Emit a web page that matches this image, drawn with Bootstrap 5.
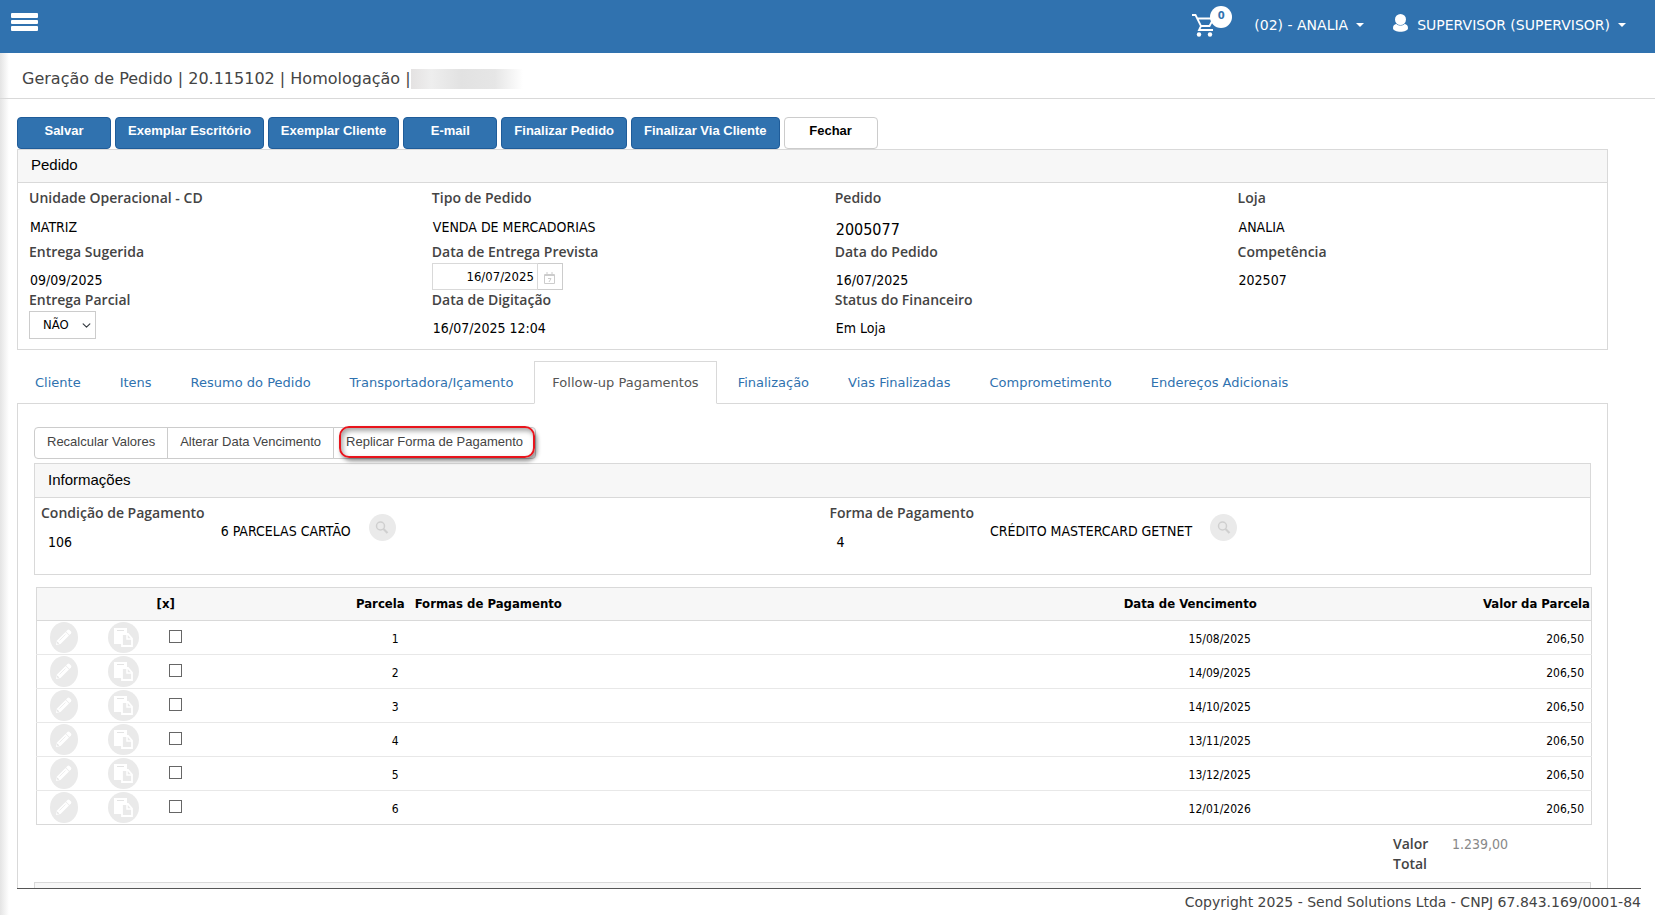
<!DOCTYPE html>
<html lang="pt-BR">
<head>
<meta charset="utf-8">
<meta name="viewport" content="width=device-width, initial-scale=1">
<title>Geração de Pedido</title>
<link href="https://cdn.jsdelivr.net/npm/bootstrap@5.3.0/dist/css/bootstrap.min.css" rel="stylesheet">
<style>
  body { font-family: "DejaVu Sans", Verdana, sans-serif; font-size: 13px; color: #444; background: #fff; }
  a { text-decoration: none; }
  .topbar { height: 53px; background: #3072af; font-size: 14px; }
  .topbar a, .topbar button { color: #fff; }
  .menu-btn { padding: 13px 11px; background: none; border: 0; line-height: 0; }
  .user-links { padding-right: 29px; line-height: 20px; height: 50px; }
  .user-links .dropdown-toggle::after { margin-left: 8px; border-width: 4px; border-bottom: 0; vertical-align: 3px; }
  .cart { padding-right: 18px; line-height: 0; }
  .cart-count { position: absolute; left: 18px; top: -8px; width: 22px; height: 22px; border-radius: 50%; background: #fff; color: #3072af; font: bold 10px/20px "DejaVu Sans", sans-serif; text-align: center; }
  .page-title { font-size: 16px; line-height: 20px; margin: 0; padding: 16px 22px 9px; border-bottom: 1px solid #d9d9d9; font-weight: 400; }
  .redacted { width: 112px; height: 20px; background: linear-gradient(90deg, #e4e2e2, #eee 18%, #e2e2e2 45%, #e6e6e6 75%, #fff); }
  .work { background: linear-gradient(90deg, #e4e4e4, #fff 9px); }
  .scroll-area { overflow: hidden; padding: 18px 47px 0 17px; }
  .act { height: 32px; min-width: 94px; padding: 0 12px 4px; border: 1px solid #1f5c99; border-radius: 4px; background: #3072af; color: #fff; font: bold 13px/20px "Liberation Sans", Arial, sans-serif; }
  .act-light { background: #fff; border-color: #ccc; color: #000; }
  .box { border: 1px solid #d9d9d9; background: #fff; }
  .box-head { font: 15px/20px "Liberation Sans", Arial, sans-serif; color: #000; background: #f7f7f7; border-bottom: 1px solid #d9d9d9; padding: 5px 13px 7px; margin: 0; }
  .box-head-tall { padding-top: 6px; }
  .order-grid { display: grid; grid-template-columns: repeat(3, 25.53%) 1fr; padding: 5px 0 10px 11px; }
  .lbl { display: block; font: 600 14px/20px "Open Sans", sans-serif; color: #444; }
  .val { font: 14px/20px "DejaVu Sans Condensed", "Open Sans", sans-serif; color: #000; padding: 8px 0 0 1px; }
  .val-tall { height: 34px; padding-top: 9px; }
  .val-big { font-size: 16px; line-height: 26px; }
  .date-box { width: 131px; height: 27px; margin-top: 1px; }
  .date-box input { border: 1px solid #d9d9d9; border-radius: 0; padding: 0 3px; font: 13px/20px "DejaVu Sans Condensed", sans-serif; color: #000; text-align: right; width: 106px; flex: none; }
  .date-box button { border: 1px solid #ccc; border-left: 0; border-radius: 0; background: #fff; flex: 1; padding: 2px 0 0; line-height: 0; }
  .sel { width: 67px; height: 28px; margin-top: 1px; border: 1px solid #ccc; border-radius: 0; padding: 0 0 0 13px; font: 13px/20px "DejaVu Sans Condensed", sans-serif; color: #000; background-size: 9px; background-position: right 4px center; }
  .order-tabs { margin-top: 11px; border-bottom: 1px solid #d9d9d9; }
  .order-tabs .nav-link { padding: 10px 17px; line-height: 21px; margin-right: 3px; color: #3072af; border-radius: 0; }
  .order-tabs .nav-link.active { color: #555; border-color: #d9d9d9 #d9d9d9 #fff; }
  .pane { border: solid #d9d9d9; border-width: 0 1px; padding: 23px 16px 0; background: #fff; }
  .tool-group .tool { height: 32px; padding: 0 12px 3px; border: 1px solid #ccc; background: #fff; color: #444; font: 13px/20px "Liberation Sans", Arial, sans-serif; }
  .tool-group .tool:not(:first-child) { margin-left: -1px; }
  .tool-group .tool:first-child { border-radius: 4px 0 0 4px; }
  .tool-group .tool:last-of-type { border-radius: 0 4px 4px 0; }
  .callout-ring { position: absolute; right: 1px; top: -1px; width: 196px; height: 32px; border: 2px solid #e8141c; border-radius: 10px; box-shadow: 2px 3px 4px rgba(0,0,0,.45), inset 2px 3px 5px rgba(0,0,0,.35); pointer-events: none; }
  .info-grid { display: grid; grid-template-columns: 50.9% 1fr; height: 76px; padding: 5px 0 0 6px; }
  .info-item { gap: 15px; }
  .code { padding: 9px 0 0 7px; }
  .desc { padding-top: 18px; }
  .round { width: 27px; height: 27px; border: 0; border-radius: 50%; background: #eaeaea; padding: 0; line-height: 0; margin: 11px 0 0 3px; }
  .parcels { margin: 12px -1px 0 2px; }
  .parcels table { width: 100%; table-layout: fixed; border: 1px solid #d9d9d9; border-collapse: collapse; color: #000; font: 12px/20px "DejaVu Sans Condensed", sans-serif; }
  .parcels th { background: #f7f7f7; border-bottom: 1px solid #d9d9d9; font-size: 13px; height: 33px; padding: 0 5px; }
  .parcels td { border-top: 1px solid #e8e8e8; height: 34px; padding: 2px 11px 0; vertical-align: middle; }
  .parcels td.ic { padding: 0 0 0 2px; text-align: center; line-height: 0; }
  .parcels td.ck { padding: 0 0 2px 17px; line-height: 0; }
  .parcels th.last { padding-right: 1px; }
  .parcels td.last { padding-right: 7px; }
  .parcels input { appearance: none; width: 13px; height: 13px; margin: 0; border: 1px solid #666; background: #fff; border-radius: 0; }
  .rowbtn { width: 31px; height: 31px; border: 0; border-radius: 50%; background: #eaeaea; padding: 0; line-height: 0; }
  .rowbtn-edit { width: 28px; margin-right: 4px; }
  .totals { width: 198px; padding-top: 9px; margin-bottom: 8px; }
  .totals .lbl { width: 59px; }
  .totals output { font: 14px/20px "DejaVu Sans Condensed", sans-serif; color: #888; }
  .foot { margin: 0 14px 0 17px; border-top: 1px solid #555; font-size: 14px; line-height: 20px; padding: 3px 0; text-align: right; }
</style>
</head>
<body class="vh-100 d-flex flex-column overflow-hidden">
<header class="topbar d-flex justify-content-between align-items-start flex-shrink-0">
  <button class="menu-btn" type="button" aria-label="Menu">
    <svg width="27" height="19" viewBox="0 0 27 19" fill="#fff"><rect y="0" width="27" height="5" rx="1"/><rect y="7" width="27" height="4" rx="1"/><rect y="13" width="27" height="5" rx="1"/></svg>
  </button>
  <nav class="user-links d-flex align-items-center">
    <a class="cart position-relative" href="#" aria-label="Carrinho">
      <svg width="24" height="23" viewBox="0 0 24 23" fill="none" stroke="#fff" stroke-width="1.800"><path d="M0 1h3.500l5.500 11-2 4h14M4.500 4.500h17l-4 7.500H8.500"/><circle cx="7" cy="20.500" r="2.200" fill="#fff" stroke="none"/><circle cx="18" cy="20.500" r="2.200" fill="#fff" stroke="none"/></svg>
      <span class="cart-count">0</span>
    </a>
    <a class="dropdown-toggle ms-1 ps-3 me-4" href="#">(02) - ANALIA</a>
    <a class="dropdown-toggle d-flex align-items-center" href="#">
      <svg class="me-2 ms-1 mb-1" width="17" height="18" viewBox="0 0 17 18" fill="#fff"><circle cx="8.500" cy="5.500" r="5.500"/><path d="M1 14c0-3 2-4 3.500-4 2 2 6 2 8 0C14 10 16 11 16 14c0 5-15 5-15 0Z"/></svg>
      SUPERVISOR (SUPERVISOR)</a>
  </nav>
</header>

<div class="work d-flex flex-column flex-grow-1 overflow-hidden">
  <h1 class="page-title d-flex">Geração de Pedido | 20.115102 | Homologação |<span class="redacted"></span></h1>

  <main class="scroll-area flex-grow-1">
    <div class="d-flex" style="gap:4px">
      <button class="act" type="button">Salvar</button>
      <button class="act" type="button">Exemplar Escritório</button>
      <button class="act" type="button">Exemplar Cliente</button>
      <button class="act" type="button">E-mail</button>
      <button class="act" type="button">Finalizar Pedido</button>
      <button class="act" type="button">Finalizar Via Cliente</button>
      <button class="act act-light" type="button">Fechar</button>
    </div>

    <section class="box">
      <h2 class="box-head">Pedido</h2>
      <div class="order-grid">
        <div><span class="lbl">Unidade Operacional - CD</span><div class="val val-tall">MATRIZ</div></div>
        <div><span class="lbl">Tipo de Pedido</span><div class="val val-tall">VENDA DE MERCADORIAS</div></div>
        <div><span class="lbl">Pedido</span><div class="val val-tall val-big">2005077</div></div>
        <div><span class="lbl">Loja</span><div class="val val-tall">ANALIA</div></div>

        <div><span class="lbl">Entrega Sugerida</span><div class="val">09/09/2025</div></div>
        <div><label class="lbl" for="prevista">Data de Entrega Prevista</label>
          <div class="date-box d-flex"><input id="prevista" type="text" value="16/07/2025"><button type="button" aria-label="Abrir calendário"><svg width="11" height="12" viewBox="0 0 11 12" fill="none" stroke="#ccc"><path d="M.5 2.500h10v9H.5zM.5 3.500h10M3 0v2.500M8 0v2.500"/><path d="M4 6.500h3L5 10"/></svg></button></div></div>
        <div><span class="lbl">Data do Pedido</span><div class="val">16/07/2025</div></div>
        <div><span class="lbl">Competência</span><div class="val">202507</div></div>

        <div><label class="lbl" for="parcial">Entrega Parcial</label>
          <select id="parcial" class="form-select sel"><option>NÃO</option><option>SIM</option></select></div>
        <div><span class="lbl">Data de Digitação</span><div class="val">16/07/2025 12:04</div></div>
        <div><span class="lbl">Status do Financeiro</span><div class="val">Em Loja</div></div>
      </div>
    </section>

    <ul class="nav nav-tabs order-tabs">
      <li class="nav-item"><a class="nav-link" href="#">Cliente</a></li>
      <li class="nav-item"><a class="nav-link" href="#">Itens</a></li>
      <li class="nav-item"><a class="nav-link" href="#">Resumo do Pedido</a></li>
      <li class="nav-item"><a class="nav-link" href="#">Transportadora/Içamento</a></li>
      <li class="nav-item"><a class="nav-link active" href="#" aria-current="page">Follow-up Pagamentos</a></li>
      <li class="nav-item"><a class="nav-link" href="#">Finalização</a></li>
      <li class="nav-item"><a class="nav-link" href="#">Vias Finalizadas</a></li>
      <li class="nav-item"><a class="nav-link" href="#">Comprometimento</a></li>
      <li class="nav-item"><a class="nav-link" href="#">Endereços Adicionais</a></li>
    </ul>

    <div class="pane">
      <div class="tool-group d-inline-flex position-relative align-top">
        <button class="tool" type="button">Recalcular Valores</button>
        <button class="tool" type="button">Alterar Data Vencimento</button>
        <button class="tool" type="button">Replicar Forma de Pagamento</button>
        <span class="callout-ring"></span>
      </div>

      <section class="box mt-1">
        <h2 class="box-head box-head-tall">Informações</h2>
        <div class="info-grid">
          <div class="info-item d-flex align-items-start">
            <div><span class="lbl">Condição de Pagamento</span><div class="val code">106</div></div>
            <div class="val desc">6 PARCELAS CARTÃO</div>
            <button class="round" type="button" aria-label="Buscar condição"><svg width="14" height="14" viewBox="0 0 14 14" fill="none" stroke="#cfcfcf" stroke-width="1.500"><circle cx="5.500" cy="5" r="4"/><path d="m8.500 8 4 4" stroke-width="2.200"/></svg></button>
          </div>
          <div class="info-item d-flex align-items-start">
            <div><span class="lbl">Forma de Pagamento</span><div class="val code">4</div></div>
            <div class="val desc">CRÉDITO MASTERCARD GETNET</div>
            <button class="round" type="button" aria-label="Buscar forma"><svg width="14" height="14" viewBox="0 0 14 14" fill="none" stroke="#cfcfcf" stroke-width="1.500"><circle cx="5.500" cy="5" r="4"/><path d="m8.500 8 4 4" stroke-width="2.200"/></svg></button>
          </div>
        </div>
      </section>

      <div class="parcels">
        <table>
          <colgroup><col style="width:3.6%"><col style="width:3.8%"><col style="width:3%"><col style="width:13.6%"><col style="width:41.1%"><col style="width:13.7%"><col style="width:21.2%"></colgroup>
          <thead><tr><th></th><th></th><th>[x]</th><th class="text-end">Parcela</th><th>Formas de Pagamento</th><th class="text-end">Data de Vencimento</th><th class="text-end last">Valor da Parcela</th></tr></thead>
          <tbody id="rows"></tbody>
        </table>
      </div>

      <div class="totals d-flex align-items-start ms-auto">
        <label class="lbl" for="total">Valor<br>Total</label>
        <output id="total">1.239,00</output>
      </div>

      <section class="box"><div class="box-head">&nbsp;</div></section>
    </div>
  </main>
  <footer class="foot">Copyright 2025 - Send Solutions Ltda - CNPJ 67.843.169/0001-84</footer>
</div>

<script src="https://cdn.jsdelivr.net/npm/bootstrap@5.3.0/dist/js/bootstrap.bundle.min.js"></script>
<script>
  const pencil = '<svg width="17" height="17" viewBox="0 0 17 17"><path d="M1 16l1-4.500L10.500 3l3.500 3.500L5.500 15z" fill="#fff"/><path d="M11 2.500l1.500-1.500q1-.8 2 0l1.500 1.500q.8 1 0 2L14.500 6z" fill="#fff"/><path d="M2.300 12.500l2 2-1.500.4-.9-.9z" fill="#e3e3e3"/><path d="M4.500 11.500l6-6" stroke="#eee"/></svg>';
  const pages = '<svg width="19" height="21" viewBox="0 0 19 21"><path d="M0 1h13v6H8v10H0z" fill="#fff"/><path d="M3 3.500h7" stroke="#e3e3e3"/><path d="M8 7h6l4 4.500V19H8z" fill="#eaeaea" stroke="#fff" stroke-width="1.800"/><path d="M13 7v5h5" fill="none" stroke="#fff" stroke-width="1.500"/></svg>';
  const dates = ['15/08/2025', '14/09/2025', '14/10/2025', '13/11/2025', '13/12/2025', '12/01/2026'];
  document.getElementById('rows').innerHTML = dates.map((d, i) => `<tr>
    <td class="ic"><button class="rowbtn rowbtn-edit" type="button" aria-label="Editar parcela ${i + 1}">${pencil}</button></td>
    <td class="ic"><button class="rowbtn" type="button" aria-label="Copiar parcela ${i + 1}">${pages}</button></td>
    <td class="ck"><input type="checkbox" aria-label="Selecionar parcela ${i + 1}"></td>
    <td class="text-end">${i + 1}</td><td></td><td class="text-end">${d}</td><td class="text-end last">206,50</td></tr>`).join('');
</script>
</body>
</html>
